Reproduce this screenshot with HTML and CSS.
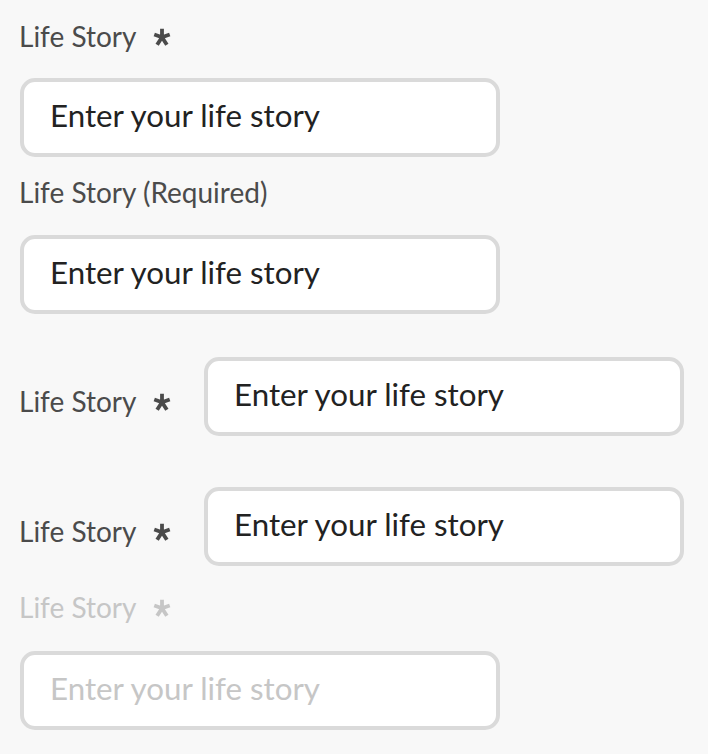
FILE: index.html
```html
<!DOCTYPE html>
<html lang="en">
<head>
<meta charset="utf-8">
<title>Life Story fields</title>
<link rel="stylesheet" href="styles.css">
</head>
<body>
<main class="page">
  <div class="field field--top g1">
    <label class="label" for="f1">Life Story <svg class="req" viewBox="0 0 17 17" aria-hidden="true"><path d="M8.5 0.8V8.7M8.5 8.7L1.2 6.1M8.5 8.7L15.8 6.1M8.5 8.7L3.9 15.9M8.5 8.7L13.1 15.9"/></svg></label>
    <input class="input" id="f1" type="text" value="Enter your life story">
  </div>
  <div class="field field--top g2">
    <label class="label" for="f2">Life Story (Required)</label>
    <input class="input" id="f2" type="text" value="Enter your life story">
  </div>
  <div class="field field--side g3">
    <label class="label" for="f3">Life Story <svg class="req" viewBox="0 0 17 17" aria-hidden="true"><path d="M8.5 0.8V8.7M8.5 8.7L1.2 6.1M8.5 8.7L15.8 6.1M8.5 8.7L3.9 15.9M8.5 8.7L13.1 15.9"/></svg></label>
    <input class="input" id="f3" type="text" value="Enter your life story">
  </div>
  <div class="field field--side g4">
    <label class="label" for="f4">Life Story <svg class="req" viewBox="0 0 17 17" aria-hidden="true"><path d="M8.5 0.8V8.7M8.5 8.7L1.2 6.1M8.5 8.7L15.8 6.1M8.5 8.7L3.9 15.9M8.5 8.7L13.1 15.9"/></svg></label>
    <input class="input" id="f4" type="text" value="Enter your life story">
  </div>
  <div class="field field--top field--disabled g5">
    <label class="label" for="f5">Life Story <svg class="req" viewBox="0 0 17 17" aria-hidden="true"><path d="M8.5 0.8V8.7M8.5 8.7L1.2 6.1M8.5 8.7L15.8 6.1M8.5 8.7L3.9 15.9M8.5 8.7L13.1 15.9"/></svg></label>
    <input class="input" id="f5" type="text" value="Enter your life story" disabled>
  </div>
</main>
</body>
</html>
```

FILE: styles.css
```css
html, body {
  margin: 0;
  padding: 0;
  background: #f8f8f8;
}

body {
  font-family: Lato, "Open Sans", sans-serif;
  width: 708px;
  height: 754px;
  overflow: hidden;
}

.page {
  display: flex;
  flex-direction: column;
  padding-left: 20px;
}

.field--top {
  display: flex;
  flex-direction: column;
  align-items: flex-start;
}

.field--side {
  display: flex;
  flex-direction: row;
  align-items: flex-start;
}

.label {
  font-size: 28px;
  line-height: 36px;
  height: 36px;
  color: #4b4b4b;
  margin-left: -1px;
  white-space: nowrap;
}

.req {
  width: 18px;
  height: 18px;
  margin-left: 10px;
  vertical-align: 1px;
  fill: none;
  stroke: #4b4b4b;
  stroke-width: 3.6;
}

.field--top .label {
  margin-bottom: 24px;
}

.field--side .label {
  width: 185px;
  padding-top: 26px;
}

.input {
  box-sizing: border-box;
  width: 480px;
  height: 79px;
  margin: 0;
  border: 4px solid #dadada;
  border-radius: 15px;
  background: #fff;
  padding: 0 0 6px 26px;
  font-family: inherit;
  font-size: 31.3px;
  color: #222;
  outline: none;
}

.g1 { margin-top: 18px; }
.g2 { margin-top: 17px; }
.g2 .label { margin-bottom: 25px; }
.g3 { margin-top: 43px; }
.g4 { margin-top: 51px; }
.g5 { margin-top: 23px; }
.g5 .label { margin-bottom: 26px; }

.field--disabled .label {
  color: #c6c6c6;
}

.field--disabled .req {
  stroke: #c6c6c6;
}

.field--disabled .input {
  color: #c6c6c6;
  background: #fff;
  border-color: #dadada;
}
```
